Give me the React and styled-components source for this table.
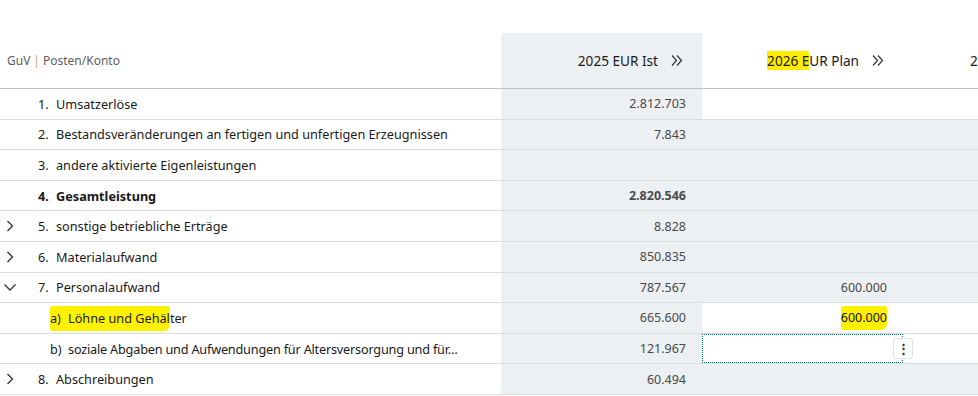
import React from 'react'
import styled, { createGlobalStyle } from 'styled-components'

const GlobalStyle = createGlobalStyle`
  body {
    margin: 0;
    font-family: "Noto Sans", "Open Sans", sans-serif;
    background: #fff;
    color: #1f1f1f;
  }
`

const GREY = '#edf0f3'

const rows = [
    { no: '1.', label: 'Umsatzerlöse', ist: '2.812.703', planGrey: false },
    { no: '2.', label: 'Bestandsveränderungen an fertigen und unfertigen Erzeugnissen', ist: '7.843' },
    { no: '3.', label: 'andere aktivierte Eigenleistungen', ist: '' },
    { no: '4.', label: 'Gesamtleistung', ist: '2.820.546', bold: true },
    { no: '5.', label: 'sonstige betriebliche Erträge', ist: '8.828', toggle: 'right' },
    { no: '6.', label: 'Materialaufwand', ist: '850.835', toggle: 'right' },
    { no: '7.', label: 'Personalaufwand', ist: '787.567', plan: '600.000', toggle: 'down' },
    { no: 'a)', label: 'Löhne und Gehälter', ist: '665.600', plan: '600.000', sub: true, edit: true, mark: true },
    { no: 'b)', label: 'soziale Abgaben und Aufwendungen für Altersversorgung und für…', ist: '121.967', sub: true, edit: true, focus: true, tight: true },
    { no: '8.', label: 'Abschreibungen', ist: '60.494', toggle: 'right' },
]

const Chevron = ({ down }) => (
    <svg width="14" height="12" viewBox="0 0 14 12" fill="none" stroke="#333" strokeWidth="1.3">
        {down ? <polyline points="1.5,3.5 7,9 12.5,3.5" /> : <polyline points="4.5,1 9.5,6 4.5,11" />}
    </svg>
)

const DoubleChevron = () => (
    <svg width="12" height="11" viewBox="0 0 12 11" fill="none" stroke="#333" strokeWidth="1.2">
        <polyline points="1,0.5 5.5,5.5 1,10.5" />
        <polyline points="6,0.5 10.5,5.5 6,10.5" />
    </svg>
)

function App() {
    return (
        <>
            <GlobalStyle />
            <Table>
                <HeadRow>
                    <HeadLabel>GuV <Sep>|</Sep> Posten/Konto</HeadLabel>
                    <HeadCell $grey>
                        <span>2025 EUR Ist</span>
                        <DoubleChevron />
                    </HeadCell>
                    <HeadCell>
                        <span><Mark>2026 E</Mark>UR Plan</span>
                        <DoubleChevron />
                    </HeadCell>
                    <HeadCell $clip>2</HeadCell>
                </HeadRow>
                {rows.map((r, i) => (
                    <Row key={i}>
                        <LabelCell $bold={r.bold}>
                            <Toggle>
                                {r.toggle === 'right' && <Chevron />}
                                {r.toggle === 'down' && <Chevron down />}
                            </Toggle>
                            <Label $sub={r.sub} $tight={r.tight}>
                                {r.mark ? (
                                    <>
                                        <Marker><No>{r.no}</No>Löhne und Gehäl</Marker>ter
                                    </>
                                ) : (
                                    <><No>{r.no}</No>{r.label}</>
                                )}
                            </Label>
                        </LabelCell>
                        <ValueCell $grey $bold={r.bold}>{r.ist}</ValueCell>
                        <ValueCell $grey={!r.edit && r.planGrey !== false} $focus={r.focus}>
                            {r.mark ? <Marker $dark>{r.plan}</Marker> : r.plan}
                            {r.focus && <MenuButton>⋮</MenuButton>}
                        </ValueCell>
                        <ValueCell $grey={!r.edit && r.planGrey !== false} />
                    </Row>
                ))}
            </Table>
        </>
    )
}

const Table = styled.div`
    width: 978px;
    display: flex;
    flex-direction: column;
`

const Grid = styled.div`
    display: grid;
    grid-template-columns: 501px 201px 201px 1fr;
`

const HeadRow = styled(Grid)`
    padding-top: 33px;
    border-bottom: 1px solid #c2c2c2;
`

const HeadLabel = styled.div`
    display: flex;
    align-items: center;
    gap: 3px;
    padding-left: 7px;
    height: 55px;
    font-size: 12px;
    color: #5e5e5e;
`

const Sep = styled.span`
    color: #d0a070;
`

const HeadCell = styled.div`
    display: flex;
    align-items: center;
    justify-content: ${p => (p.$clip ? 'flex-start' : 'flex-end')};
    gap: 13px;
    padding: ${p => (p.$clip ? '0 0 0 67px' : '0 19px 0 0')};
    height: 55px;
    font-size: 13.6px;
    color: #1a1a1a;
    background: ${p => (p.$grey ? GREY : '#fff')};
`

const Mark = styled.span`
    background: #ffec00;
`

const Marker = styled.span`
    background: #fff200;
    padding: 3px 0 4px;
    border-radius: 2px 3px 6px 2px;
    color: ${p => (p.$dark ? '#111' : 'inherit')};
`

const Row = styled(Grid)`
    height: 30.6px;
    box-sizing: border-box;
    border-bottom: 1px solid #dcdcdc;
`

const LabelCell = styled.div`
    display: flex;
    align-items: center;
    font-size: 12.7px;
    font-weight: ${p => (p.$bold ? 700 : 400)};
    color: #1a1a1a;
    white-space: nowrap;
    overflow: hidden;
`

const Toggle = styled.span`
    width: 38px;
    padding-left: 3px;
    box-sizing: border-box;
    display: flex;
    align-items: center;
`

const Label = styled.span`
    padding-left: ${p => (p.$sub ? '12px' : '0')};
    letter-spacing: ${p => (p.$tight ? '-0.2px' : 'normal')};
`

const No = styled.span`
    display: inline-block;
    min-width: 18px;
    letter-spacing: normal;
`

const ValueCell = styled.div`
    position: relative;
    display: flex;
    align-items: center;
    justify-content: flex-end;
    padding-right: 16px;
    font-size: 12.5px;
    font-weight: ${p => (p.$bold ? 700 : 400)};
    color: #4a4a4a;
    background: ${p => (p.$grey ? GREY : '#fff')};
    outline: ${p => (p.$focus ? '1px dotted #0b7c7c' : 'none')};
    outline-offset: -1px;
`

const MenuButton = styled.button`
    position: absolute;
    right: -10px;
    top: 4px;
    width: 20px;
    height: 21px;
    padding: 0;
    border: 1px solid #dde3e6;
    border-radius: 3px;
    background: #fff;
    font-size: 13px;
    font-weight: 700;
    line-height: 1;
    color: #333;
    z-index: 2;
`

export default App
